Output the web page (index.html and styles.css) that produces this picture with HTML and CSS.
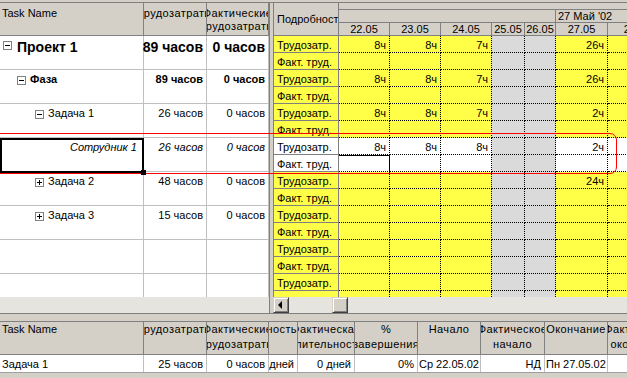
FILE: index.html
```html
<!DOCTYPE html>
<html>
<head>
<meta charset="utf-8">
<link rel="stylesheet" href="styles.css">
</head>
<body>
<div class="app">
  <div class="top">
    <div class="lpane">
      <div class="lhead">
        <div class="hc left"><span>Task Name</span></div>
        <div class="hc"><span>Трудозатраты</span></div>
        <div class="hc"><span>Фактические</span><span>трудозатраты</span></div>
      </div>
      <div class="lrow big">
        <div class="lc name l0"><svg class="tb" width="9" height="9" viewBox="0 0 9 9"><rect x="0.5" y="0.5" width="8" height="8" fill="#fff" stroke="#808080"/><path d="M2 4.5h5" stroke="#000"/></svg><span>Проект 1</span></div>
        <div class="lc num">89 часов</div>
        <div class="lc num">0 часов</div>
      </div>
      <div class="lrow bold">
        <div class="lc name l1"><svg class="tb" width="9" height="9" viewBox="0 0 9 9"><rect x="0.5" y="0.5" width="8" height="8" fill="#fff" stroke="#808080"/><path d="M2 4.5h5" stroke="#000"/></svg><span>Фаза</span></div>
        <div class="lc num">89 часов</div>
        <div class="lc num">0 часов</div>
      </div>
      <div class="lrow">
        <div class="lc name l2"><svg class="tb" width="9" height="9" viewBox="0 0 9 9"><rect x="0.5" y="0.5" width="8" height="8" fill="#fff" stroke="#808080"/><path d="M2 4.5h5" stroke="#000"/></svg><span>Задача 1</span></div>
        <div class="lc num">26 часов</div>
        <div class="lc num">0 часов</div>
      </div>
      <div class="lrow ital">
        <div class="lc name res selected"><span>Сотрудник 1</span><i class="handle"></i></div>
        <div class="lc num">26 часов</div>
        <div class="lc num">0 часов</div>
      </div>
      <div class="lrow">
        <div class="lc name l2"><svg class="tb" width="9" height="9" viewBox="0 0 9 9"><rect x="0.5" y="0.5" width="8" height="8" fill="#fff" stroke="#808080"/><path d="M2 4.5h5M4.5 2v5" stroke="#000"/></svg><span>Задача 2</span></div>
        <div class="lc num">48 часов</div>
        <div class="lc num">0 часов</div>
      </div>
      <div class="lrow">
        <div class="lc name l2"><svg class="tb" width="9" height="9" viewBox="0 0 9 9"><rect x="0.5" y="0.5" width="8" height="8" fill="#fff" stroke="#808080"/><path d="M2 4.5h5M4.5 2v5" stroke="#000"/></svg><span>Задача 3</span></div>
        <div class="lc num">15 часов</div>
        <div class="lc num">0 часов</div>
      </div>
      <div class="lrow">
        <div class="lc"></div><div class="lc"></div><div class="lc"></div>
      </div>
      <div class="lrow part">
        <div class="lc"></div><div class="lc"></div><div class="lc"></div>
      </div>
      <div class="lfill"></div>
    </div>
    <div class="vsplit"></div>
    <div class="rpane">
      <div class="rhead">
        <div class="podh">Подробности</div>
        <div class="tscale">
          <div class="tband"></div>
          <div class="tier1"><div class="t1a"></div><div class="t1b">27 Май '02</div></div>
          <div class="tier2">
            <div>22.05</div><div>23.05</div><div>24.05</div><div>25.05</div><div>26.05</div><div>27.05</div><div>28.05</div>
          </div>
        </div>
      </div>
      <div class="rbody">
        <div class="rrow"><div class="pc y">Трудозатр.</div><div class="tc y">8ч</div><div class="tc y">8ч</div><div class="tc y">7ч</div><div class="tc g"></div><div class="tc g"></div><div class="tc y">26ч</div><div class="tc y"></div></div>
        <div class="rrow"><div class="pc y">Факт. труд.</div><div class="tc y"></div><div class="tc y"></div><div class="tc y"></div><div class="tc g"></div><div class="tc g"></div><div class="tc y"></div><div class="tc y"></div></div>
        <div class="rrow"><div class="pc y">Трудозатр.</div><div class="tc y">8ч</div><div class="tc y">8ч</div><div class="tc y">7ч</div><div class="tc g"></div><div class="tc g"></div><div class="tc y">26ч</div><div class="tc y"></div></div>
        <div class="rrow"><div class="pc y">Факт. труд.</div><div class="tc y"></div><div class="tc y"></div><div class="tc y"></div><div class="tc g"></div><div class="tc g"></div><div class="tc y"></div><div class="tc y"></div></div>
        <div class="rrow"><div class="pc y">Трудозатр.</div><div class="tc y">8ч</div><div class="tc y">8ч</div><div class="tc y">7ч</div><div class="tc g"></div><div class="tc g"></div><div class="tc y">2ч</div><div class="tc y"></div></div>
        <div class="rrow"><div class="pc y">Факт. труд.</div><div class="tc y"></div><div class="tc y"></div><div class="tc y"></div><div class="tc g"></div><div class="tc g"></div><div class="tc y"></div><div class="tc y"></div></div>
        <div class="rrow"><div class="pc w">Трудозатр.</div><div class="tc w">8ч</div><div class="tc w">8ч</div><div class="tc w">8ч</div><div class="tc g"></div><div class="tc g"></div><div class="tc w">2ч</div><div class="tc w"></div></div>
        <div class="rrow"><div class="pc w">Факт. труд.</div><div class="tc w sel"></div><div class="tc w"></div><div class="tc w"></div><div class="tc g"></div><div class="tc g"></div><div class="tc w"></div><div class="tc w"></div></div>
        <div class="rrow"><div class="pc y">Трудозатр.</div><div class="tc y"></div><div class="tc y"></div><div class="tc y"></div><div class="tc g"></div><div class="tc g"></div><div class="tc y">24ч</div><div class="tc y"></div></div>
        <div class="rrow"><div class="pc y">Факт. труд.</div><div class="tc y"></div><div class="tc y"></div><div class="tc y"></div><div class="tc g"></div><div class="tc g"></div><div class="tc y"></div><div class="tc y"></div></div>
        <div class="rrow"><div class="pc y">Трудозатр.</div><div class="tc y"></div><div class="tc y"></div><div class="tc y"></div><div class="tc g"></div><div class="tc g"></div><div class="tc y"></div><div class="tc y"></div></div>
        <div class="rrow"><div class="pc y">Факт. труд.</div><div class="tc y"></div><div class="tc y"></div><div class="tc y"></div><div class="tc g"></div><div class="tc g"></div><div class="tc y"></div><div class="tc y"></div></div>
        <div class="rrow"><div class="pc y">Трудозатр.</div><div class="tc y"></div><div class="tc y"></div><div class="tc y"></div><div class="tc g"></div><div class="tc g"></div><div class="tc y"></div><div class="tc y"></div></div>
        <div class="rrow"><div class="pc y">Факт. труд.</div><div class="tc y"></div><div class="tc y"></div><div class="tc y"></div><div class="tc g"></div><div class="tc g"></div><div class="tc y"></div><div class="tc y"></div></div>
        <div class="rrow"><div class="pc y">Трудозатр.</div><div class="tc y"></div><div class="tc y"></div><div class="tc y"></div><div class="tc g"></div><div class="tc g"></div><div class="tc y"></div><div class="tc y"></div></div>
        <div class="rrow part"><div class="pc y"></div><div class="tc y"></div><div class="tc y"></div><div class="tc y"></div><div class="tc g"></div><div class="tc g"></div><div class="tc y"></div><div class="tc y"></div></div>
      </div>
      <div class="hscroll">
        <div class="sbtn"><svg width="14" height="14" viewBox="0 0 14 14"><path d="M8 3v8L4 7z" fill="#000"/></svg></div>
        <div class="track t1"></div>
        <div class="sbtn thumb"></div>
        <div class="track t2"></div>
      </div>
    </div>
  </div>
  <div class="hsplit"></div>
  <div class="btable">
    <div class="bhead">
      <div class="bh left"><span>Task Name</span></div>
      <div class="bh"><span>Трудозатраты</span></div>
      <div class="bh"><span>Фактические</span><span>трудозатраты</span></div>
      <div class="bh end"><span>Длительность</span></div>
      <div class="bh"><span>Фактическая</span><span>длительность</span></div>
      <div class="bh"><span>%</span><span>завершения</span></div>
      <div class="bh"><span>Начало</span></div>
      <div class="bh"><span>Фактическое</span><span>начало</span></div>
      <div class="bh"><span>Окончание</span></div>
      <div class="bh"><span>Фактическое</span><span>окончание</span></div>
    </div>
    <div class="brow">
      <div class="bc">Задача 1</div>
      <div class="bc num">25 часов</div>
      <div class="bc num">0 часов</div>
      <div class="bc num"><span>0 дней</span></div>
      <div class="bc num">0 дней</div>
      <div class="bc num">0%</div>
      <div class="bc lt">Ср 22.05.02</div>
      <div class="bc num">НД</div>
      <div class="bc lt">Пн 27.05.02</div>
      <div class="bc"></div>
    </div>
  </div>
  <div class="annot"></div>
</div>
</body>
</html>
```

FILE: styles.css
```css
* { box-sizing: border-box; margin: 0; padding: 0; }
html, body { width: 627px; height: 378px; overflow: hidden; }
body {
  background: #d4d0c8;
  font: 11px/13px "Liberation Sans", Arial, sans-serif;
  color: #000;
}
.app { position: relative; width: 627px; height: 378px; padding-top: 2px; overflow: hidden; }
.top { display: flex; height: 311px; border-top: 1px solid #808080; }

/* left table */
.lpane { width: 269px; flex: none; display: flex; flex-direction: column; }
.lhead { display: grid; grid-template-columns: 144px 63px 62px; height: 33px; border-bottom: 1px solid #808080; flex: none; }
.hc {
  background: #d4d0c8; border-right: 1px solid #808080;
  padding-top: 4px; line-height: 13px; white-space: nowrap; overflow: clip;
  display: flex; flex-direction: column; align-items: center;
  letter-spacing: 0.4px;
}
.hc span { flex: none; }
.hc.left { align-items: flex-start; padding-left: 2px; letter-spacing: 0; }
.lrow { display: grid; grid-template-columns: 144px 63px 62px; height: 34px; flex: none; }
.lrow.part { height: 23px; }
.lrow.part .lc { border-bottom: none; }
.lc {
  background: #fff; border-right: 1px solid #c0c0c0; border-bottom: 1px solid #c0c0c0;
  padding: 3px 3px 0; line-height: 13px; white-space: nowrap;
  display: flex; align-items: flex-start;
}
.lc.num { justify-content: flex-end; }
.lc .tb { flex: none; margin-top: 3px; margin-right: 4px; }
.name.l0 { padding-left: 3px; }
.name.l0 .tb { margin-right: 5px; margin-top: 2px; }
.name.l1 { padding-left: 17px; }
.name.l2 { padding-left: 35px; }
.lrow.big .lc { font-size: 14px; font-weight: bold; line-height: 17px; padding-top: 3px; }
.lrow.bold .lc { font-weight: bold; }
.lrow.ital .lc { font-style: italic; }
.name.res { justify-content: flex-end; padding-right: 6px; }
.selected { position: relative; }
.selected::after {
  content: ""; position: absolute; left: 0; top: 0; right: -1px; bottom: -2px;
  border: 2px solid #000;
}
.handle {
  position: absolute; right: -3px; bottom: -4px; width: 5px; height: 5px;
  background: #000; z-index: 2;
}
.lfill { flex: 1; background: #e6e4df; }

.vsplit { width: 4px; flex: none; border-left: 1px solid #808080; background: #d4d0c8; }

/* right grid */
.rpane { flex: 1; min-width: 0; overflow: hidden; display: flex; flex-direction: column; }
.rhead { display: flex; height: 33px; flex: none; border-bottom: 1px solid #808080; }
.podh {
  width: 66px; flex: none; background: #d4d0c8;
  border-left: 1px solid #808080; border-right: 1px solid #808080;
  padding-left: 3px; display: flex; align-items: center; white-space: nowrap; overflow: clip;
}
.tscale { flex: 1; min-width: 0; display: flex; flex-direction: column; }
.tband { height: 7px; flex: none; border-bottom: 1px solid #808080; }
.tier1 { height: 13px; flex: none; display: flex; border-bottom: 1px solid #808080; line-height: 12px; }
.t1a { width: 217px; flex: none; border-right: 1px solid #808080; }
.t1b { padding-left: 2px; white-space: nowrap; }
.tier2 { flex: 1; display: grid; grid-template-columns: 51px 51px 51px 33px 31px 52px 60px; line-height: 12px; }
.tier2 div { border-right: 1px solid #808080; text-align: center; white-space: nowrap; overflow: clip; }

.rbody { flex: none; }
.rrow { display: grid; grid-template-columns: 66px 51px 51px 51px 33px 31px 52px 60px; height: 17px; }
.rrow.part { height: 6px; }
.pc {
  border-left: 1px solid #808080; border-right: 1px solid #808080; border-bottom: 1px solid #808080;
  padding: 3px 0 0 3px; line-height: 13px; white-space: nowrap; overflow: clip;
}
.tc {
  border-right: 1px dotted #000; border-bottom: 1px dotted #000;
  padding: 3px 3px 0 0; line-height: 13px; text-align: right; white-space: nowrap; overflow: clip;
}
.rrow.part .tc, .rrow.part .pc { border-bottom: none; }
.y { background: #ffff48; }
.g { background: #dadada; }
.w { background: #fff; }
.tc.sel { border-right: 1px solid #000; box-shadow: inset 0 1px 0 #000; }

.hscroll { height: 16px; flex: none; display: flex; }
.sbtn {
  width: 16px; height: 16px; flex: none; background: #d4d0c8;
  border: 1px solid; border-color: #d4d0c8 #404040 #404040 #d4d0c8;
  box-shadow: inset 1px 1px 0 #fff, inset -1px -1px 0 #808080;
}
.sbtn svg { display: block; }
.track { background: #e6e4df; }
.track.t1 { width: 43px; flex: none; }
.track.t2 { flex: 1; }

/* splitter + bottom table */
.hsplit { height: 9px; border-top: 1px solid #808080; border-bottom: 1px solid #808080; background: #d4d0c8; }
.btable { width: 671px; }
.bhead, .brow { display: grid; grid-template-columns: 144px 63px 62px 29px 57px 63px 63px 64px 63px 63px; }
.bhead { height: 33px; border-bottom: 1px solid #808080; }
.bh {
  background: #d4d0c8; border-right: 1px solid #808080;
  line-height: 15px; white-space: nowrap; overflow: clip;
  display: flex; flex-direction: column; align-items: center;
  letter-spacing: 0.4px;
}
.bh span { flex: none; }
.bh.left { align-items: flex-start; padding-left: 2px; letter-spacing: 0; }
.bh.end { align-items: flex-end; }
.brow { height: 18px; border-bottom: 1px solid #a0a0a0; }
.bc {
  background: #fff; border-right: 1px solid #c0c0c0;
  padding: 3px 3px 0 2px; line-height: 13px; white-space: nowrap; overflow: clip;
  display: flex;
}
.bc.num { justify-content: flex-end; }
.bc.lt { padding-left: 1px; }
.bc span { flex: none; }

.annot {
  position: absolute; left: -10px; top: 133px; width: 627px; height: 41px;
  border: 1px solid #ff0000; border-radius: 0 7px 7px 0; pointer-events: none;
}
```
